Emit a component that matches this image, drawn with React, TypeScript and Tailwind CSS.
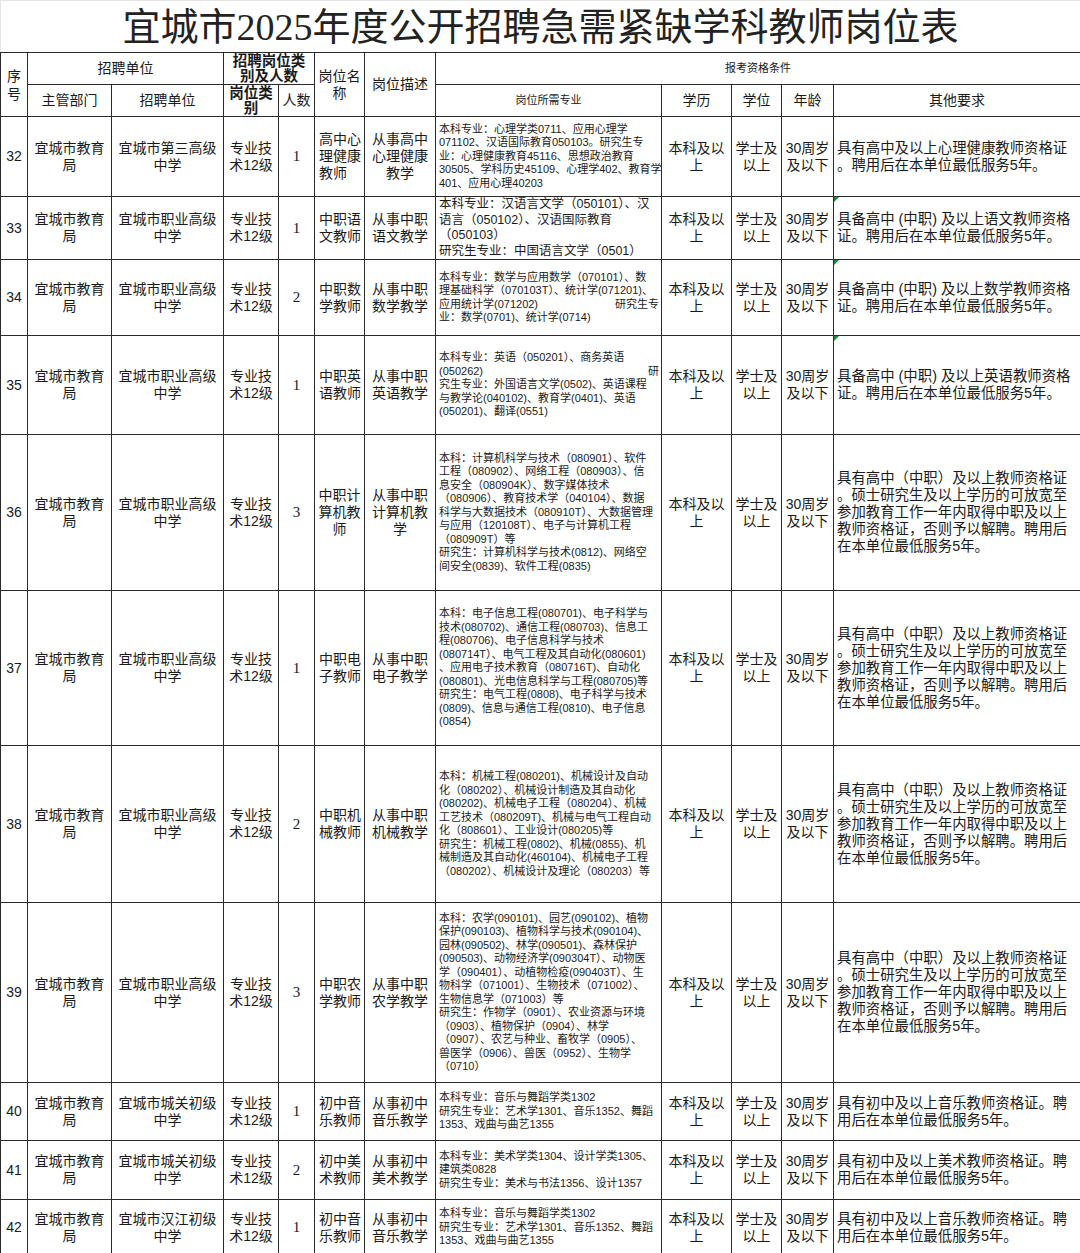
import React from 'react';

type Line = string | [string, string];

interface Row {
  no: string;
  h: string;
  unit: string[];
  num: string;
  name: string[];
  nameCenter?: boolean;
  desc: string[];
  major: Line[];
  big?: boolean;
  other: string[];
  flag?: boolean;
}

const vocOther = [
  '具有高中（中职）及以上教师资格证',
  '。硕士研究生及以上学历的可放宽至',
  '参加教育工作一年内取得中职及以上',
  '教师资格证，否则予以解聘。聘用后',
  '在本单位最低服务5年。',
];

const music: Line[] = [
  '本科专业：音乐与舞蹈学类1302',
  '研究生专业：艺术学1301、音乐1352、舞蹈',
  '1353、戏曲与曲艺1355',
];

const vocUnit = ['宜城市职业高级', '中学'];

const rows: Row[] = [
  {
    no: '32', h: 'h-[80px]', unit: ['宜城市第三高级', '中学'], num: '1',
    name: ['高中心', '理健康', '教师'], desc: ['从事高中', '心理健康', '教学'],
    major: [
      '本科专业：心理学类0711、应用心理学',
      '071102、汉语国际教育050103。研究生专',
      '业：心理健康教育45116、思想政治教育',
      '30505、学科历史45109、心理学402、教育学',
      '401、应用心理40203',
    ],
    other: ['具有高中及以上心理健康教师资格证', '。聘用后在本单位最低服务5年。'],
  },
  {
    no: '33', h: 'h-[61px]', unit: vocUnit, num: '1',
    name: ['中职语', '文教师'], desc: ['从事中职', '语文教学'], big: true,
    major: [
      '本科专业：汉语言文学（050101）、汉',
      '语言（050102）、汉语国际教育',
      '（050103）',
      '研究生专业：中国语言文学（0501）',
    ],
    other: ['具备高中 (中职) 及以上语文教师资格', '证。聘用后在本单位最低服务5年。'], flag: true,
  },
  {
    no: '34', h: 'h-[76px]', unit: vocUnit, num: '2',
    name: ['中职数', '学教师'], desc: ['从事中职', '数学教学'],
    major: [
      '本科专业：数学与应用数学（070101）、数',
      '理基础科学（070103T）、统计学(071201)、',
      ['应用统计学(071202)', '研究生专'],
      '业：数学(0701)、统计学(0714)',
    ],
    other: ['具备高中 (中职) 及以上数学教师资格', '证。聘用后在本单位最低服务5年。'], flag: true,
  },
  {
    no: '35', h: 'h-[99px]', unit: vocUnit, num: '1',
    name: ['中职英', '语教师'], desc: ['从事中职', '英语教学'],
    major: [
      '本科专业：英语（050201）、商务英语',
      ['(050262)', '研'],
      '究生专业：外国语言文学(0502)、英语课程',
      '与教学论(040102)、教育学(0401)、英语',
      '(050201)、翻译(0551)',
    ],
    other: ['具备高中 (中职) 及以上英语教师资格', '证。聘用后在本单位最低服务5年。'], flag: true,
  },
  {
    no: '36', h: 'h-[156px]', unit: vocUnit, num: '3',
    name: ['中职计', '算机教', '师'], nameCenter: true, desc: ['从事中职', '计算机教', '学'],
    major: [
      '本科：计算机科学与技术（080901）、软件',
      '工程（080902）、网络工程（080903）、信',
      '息安全（080904K）、数字媒体技术',
      '（080906）、教育技术学（040104）、数据',
      '科学与大数据技术（080910T）、大数据管理',
      '与应用（120108T）、电子与计算机工程',
      '（080909T）等',
      '研究生：计算机科学与技术(0812)、网络空',
      '间安全(0839)、软件工程(0835)',
    ],
    other: vocOther,
  },
  {
    no: '37', h: 'h-[155px]', unit: vocUnit, num: '1',
    name: ['中职电', '子教师'], desc: ['从事中职', '电子教学'],
    major: [
      '本科：电子信息工程(080701)、电子科学与',
      '技术(080702)、通信工程(080703)、信息工',
      '程(080706)、电子信息科学与技术',
      '(080714T）、电气工程及其自动化(080601)',
      '、应用电子技术教育（080716T)、自动化',
      '(080801)、光电信息科学与工程(080705)等',
      '研究生：电气工程(0808)、电子科学与技术',
      '(0809)、信息与通信工程(0810)、电子信息',
      '(0854)',
    ],
    other: vocOther,
  },
  {
    no: '38', h: 'h-[157px]', unit: vocUnit, num: '2',
    name: ['中职机', '械教师'], desc: ['从事中职', '机械教学'],
    major: [
      '本科：机械工程(080201)、机械设计及自动',
      '化（080202）、机械设计制造及其自动化',
      '(080202)、机械电子工程（080204）、机械',
      '工艺技术（080209T)、机械与电气工程自动',
      '化（808601）、工业设计(080205)等',
      '研究生：机械工程(0802)、机械(0855)、机',
      '械制造及其自动化(460104)、机械电子工程',
      '（080202）、机械设计及理论（080203）等',
    ],
    other: vocOther,
  },
  {
    no: '39', h: 'h-[180px]', unit: vocUnit, num: '3',
    name: ['中职农', '学教师'], desc: ['从事中职', '农学教学'],
    major: [
      '本科：农学(090101)、园艺(090102)、植物',
      '保护(090103)、植物科学与技术(090104)、',
      '园林(090502)、林学(090501)、森林保护',
      '(090503)、动物经济学(090304T）、动物医',
      '学（090401）、动植物检疫(090403T）、生',
      '物科学（071001）、生物技术（071002）、',
      '生物信息学（071003）等',
      '研究生：作物学（0901）、农业资源与环境',
      '（0903）、植物保护（0904）、林学',
      '（0907）、农艺与种业、畜牧学（0905）、',
      '兽医学（0906）、兽医（0952）、生物学',
      '（0710）',
    ],
    other: vocOther,
  },
  {
    no: '40', h: 'h-[58px]', unit: ['宜城市城关初级', '中学'], num: '1',
    name: ['初中音', '乐教师'], desc: ['从事初中', '音乐教学'], major: music,
    other: ['具有初中及以上音乐教师资格证。聘', '用后在本单位最低服务5年。'],
  },
  {
    no: '41', h: 'h-[59px]', unit: ['宜城市城关初级', '中学'], num: '2',
    name: ['初中美', '术教师'], desc: ['从事初中', '美术教学'],
    major: [
      '本科专业：美术学类1304、设计学类1305、',
      '建筑类0828',
      '研究生专业：美术与书法1356、设计1357',
    ],
    other: ['具有初中及以上美术教师资格证。聘', '用后在本单位最低服务5年。'],
  },
  {
    no: '42', h: 'h-[56px]', unit: ['宜城市汉江初级', '中学'], num: '1',
    name: ['初中音', '乐教师'], desc: ['从事初中', '音乐教学'], major: music,
    other: ['具有初中及以上音乐教师资格证。聘', '用后在本单位最低服务5年。'],
  },
];

const cell = 'border border-[#2a2a2a] p-0 align-middle';

function Lines({ lines }: { lines: string[] }) {
  return (
    <>
      {lines.map((l, i) => (
        <div key={i} className="whitespace-nowrap">{l}</div>
      ))}
    </>
  );
}

export default function App() {
  return (
    <div className="w-[1080px] bg-white text-[#1a1a1a] font-['Liberation_Sans','Noto_Sans_CJK_SC',sans-serif]">
      <div className="h-[52px] flex items-center justify-center border-t border-l border-[#e5e5e5]">
        <h1 className="text-[38px] leading-none text-[#222] font-['Liberation_Serif','Noto_Sans_CJK_SC',serif]">
          宜城市2025年度公开招聘急需紧缺学科教师岗位表
        </h1>
      </div>

      <table className="w-[1080px] table-fixed border-collapse">
        <colgroup>
          <col className="w-[27px]" />
          <col className="w-[84px]" />
          <col className="w-[112px]" />
          <col className="w-[55px]" />
          <col className="w-[36px]" />
          <col className="w-[50px]" />
          <col className="w-[71px]" />
          <col className="w-[226px]" />
          <col className="w-[70px]" />
          <col className="w-[50px]" />
          <col className="w-[52px]" />
          <col className="w-[247px]" />
        </colgroup>
        <thead>
          <tr className="h-[32px] text-[14px] leading-[17px]">
            <th rowSpan={2} className={`${cell} font-normal text-center leading-[18px]`}>序<br />号</th>
            <th colSpan={2} className={`${cell} font-normal text-center`}>招聘单位</th>
            <th colSpan={2} className={`${cell} font-bold text-[14.5px] leading-[15px] text-center`}>招聘岗位类<br />别及人数</th>
            <th rowSpan={2} className={`${cell} font-normal text-center`}>岗位名<br />称</th>
            <th rowSpan={2} className={`${cell} font-normal text-center`}>岗位描述</th>
            <th colSpan={5} className={`${cell} font-normal text-center text-[11px]`}>报考资格条件</th>
          </tr>
          <tr className="h-[32px] text-[14px] leading-[17px]">
            <th className={`${cell} font-normal text-center`}>主管部门</th>
            <th className={`${cell} font-normal text-center`}>招聘单位</th>
            <th className={`${cell} font-bold text-[14.5px] leading-[15px] text-center`}>岗位类<br />别</th>
            <th className={`${cell} font-normal text-center`}>人数</th>
            <th className={`${cell} font-normal text-center text-[11px]`}>岗位所需专业</th>
            <th className={`${cell} font-normal text-center`}>学历</th>
            <th className={`${cell} font-normal text-center`}>学位</th>
            <th className={`${cell} font-normal text-center`}>年龄</th>
            <th className={`${cell} font-normal text-center`}>其他要求</th>
          </tr>
        </thead>
        <tbody>
          {rows.map((r) => (
            <tr key={r.no} className={`${r.h} text-[14px] leading-[17px]`}>
              <td className={`${cell} text-center`}>{r.no}</td>
              <td className={`${cell} text-center`}><Lines lines={['宜城市教育', '局']} /></td>
              <td className={`${cell} text-center`}><Lines lines={r.unit} /></td>
              <td className={`${cell} text-center`}><Lines lines={['专业技', '术12级']} /></td>
              <td className={`${cell} text-center text-[15px] font-['Liberation_Serif',serif]`}>{r.num}</td>
              <td className={`${cell} ${r.nameCenter ? 'text-center' : 'text-left pl-[4px]'}`}><Lines lines={r.name} /></td>
              <td className={`${cell} text-center`}><Lines lines={r.desc} /></td>
              <td className={`${cell} pl-[3px] pr-[2px] ${r.big ? 'text-[12.5px] leading-[15.5px]' : 'text-[11px] leading-[13.5px]'}`}>
                {r.major.map((l, i) =>
                  typeof l === 'string' ? (
                    <div key={i} className="whitespace-nowrap">{l}</div>
                  ) : (
                    <div key={i} className="flex justify-between whitespace-nowrap">
                      <span>{l[0]}</span>
                      <span>{l[1]}</span>
                    </div>
                  )
                )}
              </td>
              <td className={`${cell} text-center`}><Lines lines={['本科及以', '上']} /></td>
              <td className={`${cell} text-center`}><Lines lines={['学士及', '以上']} /></td>
              <td className={`${cell} text-center`}><Lines lines={['30周岁', '及以下']} /></td>
              <td className={`${cell} relative pl-[3px] text-[14.4px]`}>
                {r.flag && (
                  <span className="absolute left-0 top-0 w-0 h-0 border-t-[5px] border-r-[5px] border-t-[#1f8a3a] border-r-transparent" />
                )}
                <Lines lines={r.other} />
              </td>
            </tr>
          ))}
        </tbody>
      </table>
    </div>
  );
}
